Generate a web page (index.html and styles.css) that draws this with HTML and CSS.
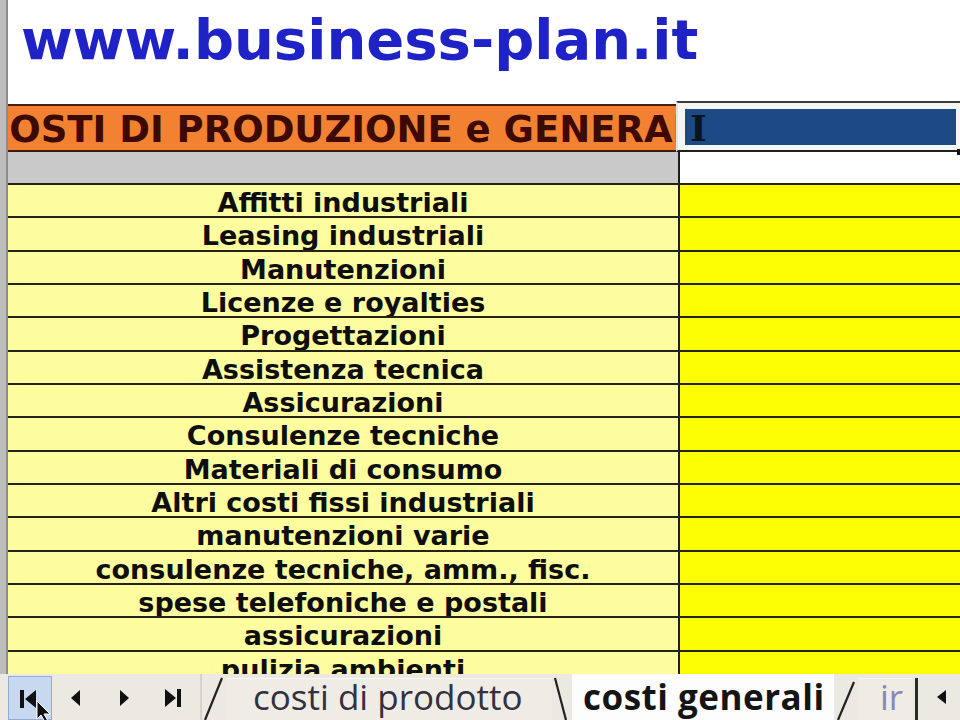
FILE: index.html
```html
<!DOCTYPE html>
<html lang="it">
<head>
<meta charset="utf-8">
<title>business-plan.it</title>
<link rel="stylesheet" href="styles.css">
</head>
<body>
<div class="screen">
  <div class="sheet">
    <div class="sheet-inner">
      <div class="title-row"><span class="title">www.business-plan.it</span></div>
      <div class="head-row">
        <div class="head-l"><span class="head-text">COSTI DI PRODUZIONE e GENERALI</span></div>
        <div class="active"><div class="active-fill">I</div><span class="handle"></span></div>
      </div>
      <div class="row gray-row">
        <div class="lab gray-l"></div><div class="vsep"></div><div class="val white"></div>
      </div>
      <div class="row"><div class="lab">Affitti industriali</div><div class="vsep"></div><div class="val"></div></div>
      <div class="row"><div class="lab">Leasing industriali</div><div class="vsep"></div><div class="val"></div></div>
      <div class="row"><div class="lab">Manutenzioni</div><div class="vsep"></div><div class="val"></div></div>
      <div class="row"><div class="lab">Licenze e royalties</div><div class="vsep"></div><div class="val"></div></div>
      <div class="row"><div class="lab">Progettazioni</div><div class="vsep"></div><div class="val"></div></div>
      <div class="row"><div class="lab">Assistenza tecnica</div><div class="vsep"></div><div class="val"></div></div>
      <div class="row"><div class="lab">Assicurazioni</div><div class="vsep"></div><div class="val"></div></div>
      <div class="row"><div class="lab">Consulenze tecniche</div><div class="vsep"></div><div class="val"></div></div>
      <div class="row"><div class="lab">Materiali di consumo</div><div class="vsep"></div><div class="val"></div></div>
      <div class="row"><div class="lab">Altri costi fissi industriali</div><div class="vsep"></div><div class="val"></div></div>
      <div class="row"><div class="lab">manutenzioni varie</div><div class="vsep"></div><div class="val"></div></div>
      <div class="row"><div class="lab">consulenze tecniche, amm., fisc.</div><div class="vsep"></div><div class="val"></div></div>
      <div class="row"><div class="lab">spese telefoniche e postali</div><div class="vsep"></div><div class="val"></div></div>
      <div class="row"><div class="lab">assicurazioni</div><div class="vsep"></div><div class="val"></div></div>
      <div class="row"><div class="lab">pulizia ambienti</div><div class="vsep"></div><div class="val"></div></div>
    </div>
  </div>
  <div class="tabbar">
    <div class="nav">
      <div class="btn btn-on">
        <svg width="24" height="22" viewBox="0 0 24 22"><rect x="2" y="2" width="4" height="18" fill="#111"/><polygon points="18,2 18,20 7,11" fill="#111"/></svg>
      </div>
      <div class="btn">
        <svg width="16" height="22" viewBox="0 0 16 22"><polygon points="12,3 12,19 3,11" fill="#111"/></svg>
      </div>
      <div class="btn">
        <svg width="16" height="22" viewBox="0 0 16 22"><polygon points="4,3 4,19 13,11" fill="#111"/></svg>
      </div>
      <div class="btn">
        <svg width="24" height="22" viewBox="0 0 24 22"><polygon points="5,2 5,20 16,11" fill="#111"/><rect x="17" y="2" width="4" height="18" fill="#111"/></svg>
      </div>
    </div>
    <div class="nav-sep"></div>
    <svg class="edge" width="24" height="46" viewBox="0 0 24 46"><line x1="3" y1="46" x2="20" y2="4" stroke="#222" stroke-width="2.2"/></svg>
    <div class="tab tab-off"><span>costi di prodotto</span></div>
    <svg class="edge" width="20" height="46" viewBox="0 0 20 46"><line x1="3" y1="4" x2="14" y2="46" stroke="#222" stroke-width="2.2"/></svg>
    <div class="tab tab-on"><span>costi generali</span></div>
    <svg class="edge" width="24" height="46" viewBox="0 0 24 46"><line x1="4" y1="46" x2="20" y2="8" stroke="#222" stroke-width="2.2"/></svg>
    <div class="tab tab-off tab-short"><span>ir</span></div>
    <div class="bar"></div>
    <div class="scroll">
      <svg width="14" height="20" viewBox="0 0 14 20"><polygon points="11,3 11,17 2,10" fill="#111"/></svg>
    </div>
    <svg class="cursor" width="20" height="22" viewBox="0 0 20 22"><polygon points="1,1 1,19 5,15 9,22 12,21 8,14 14,14" fill="#111" stroke="#fff" stroke-width="1"/></svg>
  </div>
</div>
</body>
</html>
```

FILE: styles.css
```css
html, body {
  margin: 0;
  padding: 0;
  background: #ffffff;
}
.screen {
  width: 960px;
  height: 720px;
  display: flex;
  flex-direction: column;
  overflow: hidden;
  position: relative;
}
.sheet {
  height: 674px;
  border-left: 6px solid #bcbcbc;
  overflow: hidden;
  box-sizing: border-box;
}
.sheet-inner {
  border-left: 2px solid #8c8c8c;
  height: 100%;
  display: flex;
  flex-direction: column;
}
.title-row {
  height: 101px;
  flex: none;
  box-sizing: border-box;
  padding: 12px 0 0 13px;
}
.title {
  font-family: "DejaVu Sans", Verdana, sans-serif;
  font-weight: bold;
  font-size: 56px;
  line-height: 56px;
  color: #1f22c6;
  white-space: nowrap;
}
.head-row {
  height: 51px;
  flex: none;
  display: flex;
}
.head-l {
  width: 668px;
  flex: none;
  margin-top: 3px;
  box-sizing: border-box;
  border-top: 2px solid #4a1e0c;
  border-bottom: 2px solid #3a1a0c;
  background: #f38132;
  display: flex;
  justify-content: center;
  align-items: center;
  overflow: hidden;
  padding-left: 8px;
}
.head-text {
  font-family: "DejaVu Sans", Verdana, sans-serif;
  font-weight: bold;
  font-size: 37px;
  color: #3c0a02;
  white-space: nowrap;
  flex: none;
  line-height: 44px;
  padding-top: 4px;
}
.active {
  flex: 1;
  box-sizing: border-box;
  border-top: 2px solid #3a3a3a;
  border-bottom: 2px solid #1e1e1e;
  border-left: 2px solid #dfe8df;
  background: #f4f6f4;
  padding: 6px 4px 5px 7px;
  position: relative;
}
.active-fill {
  height: 100%;
  background: #1c4a84;
  color: #0c1420;
  font-family: "DejaVu Serif", "Liberation Serif", serif;
  font-weight: bold;
  font-size: 36px;
  line-height: 38px;
  padding-left: 5px;
}
.handle {
  position: absolute;
  right: -3px;
  bottom: -5px;
  width: 6px;
  height: 6px;
  background: #111;
}
.row {
  height: 33.33px;
  flex: none;
  display: flex;
  box-sizing: border-box;
  border-top: 2px solid #23231a;
}
.gray-row {
  height: 31px;
  border-top: none;
}
.lab {
  width: 670px;
  flex: none;
  background: #fdfd9f;
  font-family: "DejaVu Sans", Verdana, sans-serif;
  font-weight: bold;
  font-size: 27px;
  color: #0e0e0e;
  text-align: center;
  white-space: nowrap;
  box-sizing: border-box;
  padding-top: 3px;
  line-height: 30px;
}
.gray-l {
  background: #c9c9c9;
}
.vsep {
  width: 2px;
  flex: none;
  background: #1c1c1c;
}
.val {
  flex: 1;
  background: #fdfd04;
}
.val.white {
  background: #ffffff;
}
.tabbar {
  height: 46px;
  flex: none;
  display: flex;
  background: #ebe9e2;
  position: relative;
  font-family: "Open Sans", "DejaVu Sans", sans-serif;
}
.nav {
  display: flex;
  padding-left: 8px;
  width: 196px;
  box-sizing: border-box;
}
.btn {
  width: 48px;
  display: flex;
  align-items: center;
  justify-content: center;
  box-sizing: border-box;
  padding-top: 2px;
}
.btn-on {
  width: 44px;
  background: #c7d8f0;
  border: 1px solid #8eacd8;
  margin: 2px 0 0 0;
}
.nav-sep {
  width: 6px;
  box-sizing: border-box;
  border-right: 2px solid #d6d3cb;
}
.edge {
  flex: none;
  display: block;
}
.tab {
  display: flex;
  align-items: center;
  font-size: 35px;
  line-height: 46px;
  white-space: nowrap;
  box-sizing: border-box;
}
.tab-off {
  width: 326px;
  background: #efece6;
  color: #34303e;
  padding-left: 27px;
  margin-top: 4px;
  line-height: 36px;
  align-items: flex-start;
  border-top: 1px solid #f8f7f3;
}
.tab-on {
  width: 262px;
  background: #fdfdfd;
  color: #151515;
  font-weight: 700;
  font-size: 35px;
  letter-spacing: 0.5px;
  padding-left: 11px;
}
.tab-short {
  width: 54px;
  padding-left: 22px;
  color: #8a86b6;
}
.bar {
  width: 4px;
  flex: none;
  box-sizing: border-box;
  border-left: 3px solid #2a2a2a;
  margin: 4px 0 0 3px;
}
.scroll {
  flex: 1;
  display: flex;
  align-items: center;
  padding-left: 16px;
}
.cursor {
  position: absolute;
  left: 36px;
  top: 26px;
}
```
